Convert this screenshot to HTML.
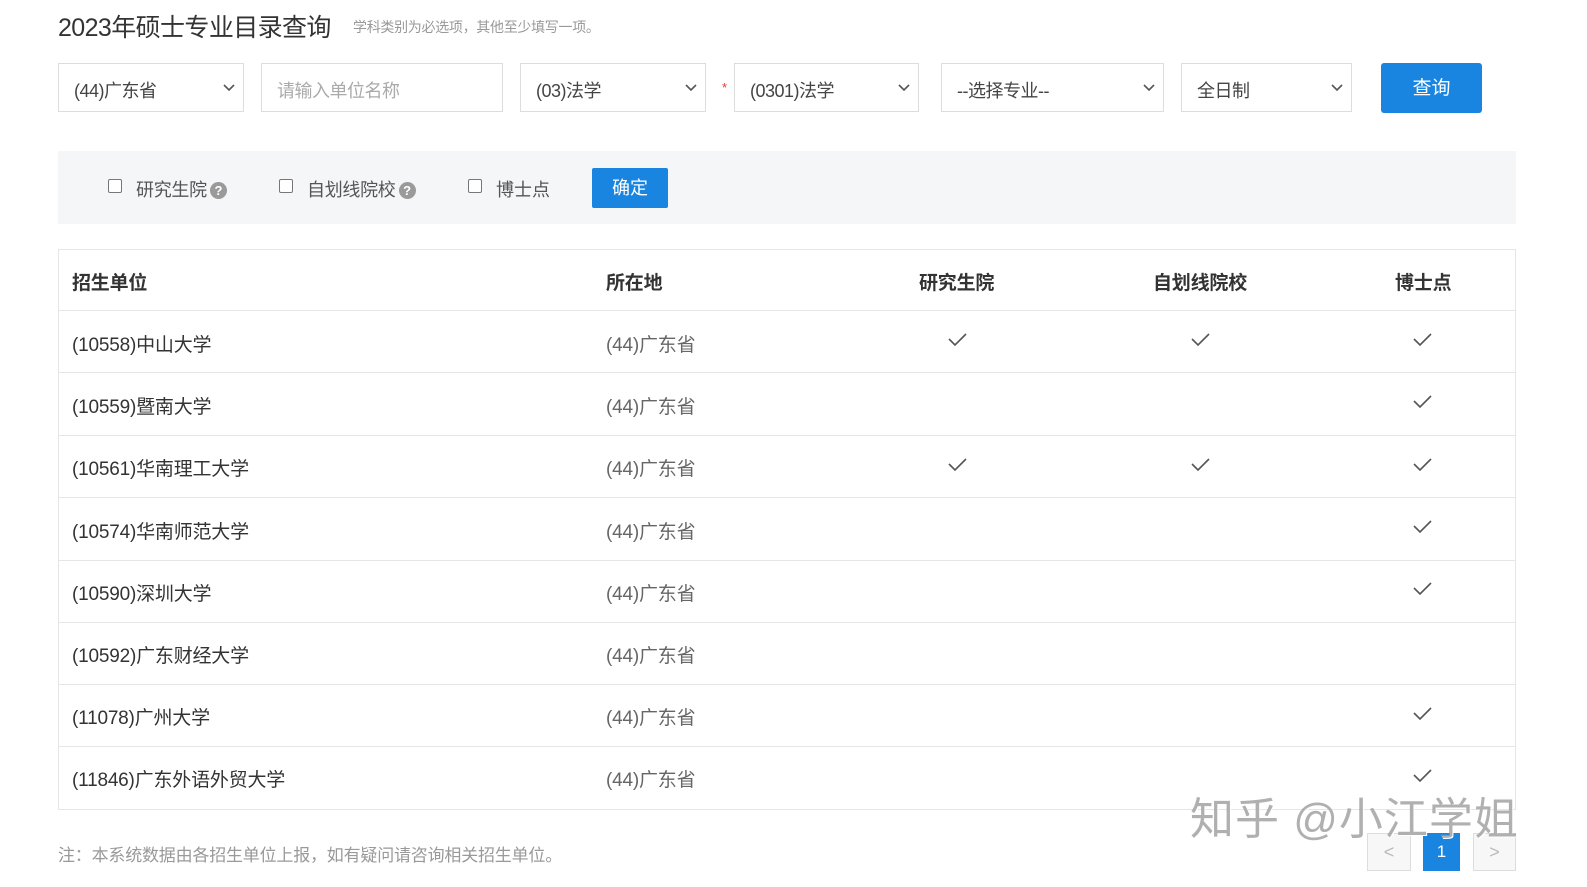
<!DOCTYPE html>
<html><head><meta charset="utf-8"><style>
*{margin:0;padding:0;box-sizing:border-box}
body{width:1587px;height:887px;background:#fff;position:relative;overflow:hidden;font-family:"Liberation Sans","Noto Sans CJK SC",sans-serif;color:#333}
.a{position:absolute;white-space:nowrap}
.sel{position:absolute;top:63px;height:49px;border:1px solid #ddd;background:#fff;font-size:18px;color:#444;padding:13px 0 0 15px;letter-spacing:-0.5px}
.sel svg{position:absolute;right:8px;top:20px}
.cb{position:absolute;width:14px;height:14px;border:1px solid #777;border-radius:2px;background:#fff;top:179px}
.q{display:inline-block;width:17px;height:17px;border-radius:50%;background:#9a9a9a;color:#fff;font-size:13px;font-weight:bold;text-align:center;line-height:17px;vertical-align:1px;margin-left:3px}
.hl{position:absolute;left:59px;width:1456px;height:1px;background:#e6e6e6}
.t{position:absolute;font-size:19px;letter-spacing:-0.2px}
</style></head><body>
<div class="a" style="left:58px;top:8px;font-size:25px;color:#333;letter-spacing:-0.6px">2023年硕士专业目录查询</div>
<div class="a" style="left:353px;top:17px;font-size:14px;color:#999;letter-spacing:-0.3px">学科类别为必选项，其他至少填写一项。</div>

<div class="sel" style="left:58px;width:186px">(44)广东省<svg width="12" height="8"><path d="M1 1l5 5 5-5" stroke="#555" stroke-width="1.6" fill="none"/></svg></div>
<div class="sel" style="left:261px;width:242px;color:#aaa">请输入单位名称</div>
<div class="sel" style="left:520px;width:186px">(03)法学<svg width="12" height="8"><path d="M1 1l5 5 5-5" stroke="#555" stroke-width="1.6" fill="none"/></svg></div>
<div class="a" style="left:722px;top:80px;color:#e33;font-size:13px">*</div>
<div class="sel" style="left:734px;width:185px">(0301)法学<svg width="12" height="8"><path d="M1 1l5 5 5-5" stroke="#555" stroke-width="1.6" fill="none"/></svg></div>
<div class="sel" style="left:941px;width:223px">--选择专业--<svg width="12" height="8"><path d="M1 1l5 5 5-5" stroke="#555" stroke-width="1.6" fill="none"/></svg></div>
<div class="sel" style="left:1181px;width:171px">全日制<svg width="12" height="8"><path d="M1 1l5 5 5-5" stroke="#555" stroke-width="1.6" fill="none"/></svg></div>
<div class="a" style="left:1381px;top:63px;width:101px;height:50px;background:#1a85e0;border-radius:3px;color:#fff;font-size:19px;text-align:center;line-height:52px">查询</div>

<div class="a" style="left:58px;top:151px;width:1458px;height:73px;background:#f5f6f7"></div>
<div class="cb" style="left:108px"></div>
<div class="a" style="left:136px;top:176px;font-size:18px;color:#555;letter-spacing:-0.3px">研究生院<span class="q">?</span></div>
<div class="cb" style="left:279px"></div>
<div class="a" style="left:307px;top:176px;font-size:18px;color:#555;letter-spacing:-0.3px">自划线院校<span class="q">?</span></div>
<div class="cb" style="left:468px"></div>
<div class="a" style="left:496px;top:176px;font-size:18px;color:#555">博士点</div>
<div class="a" style="left:592px;top:168px;width:76px;height:40px;background:#1a85e0;border-radius:2px;color:#fff;font-size:18px;text-align:center;line-height:41px">确定</div>

<div class="a" style="left:58px;top:249px;width:1458px;height:561px;border:1px solid #e6e6e6"></div>
<div class="t" style="left:72px;top:268px;font-weight:bold">招生单位</div>
<div class="t" style="left:606px;top:268px;font-weight:bold">所在地</div>
<div class="t" style="left:919px;top:268px;font-weight:bold">研究生院</div>
<div class="t" style="left:1153px;top:268px;font-weight:bold">自划线院校</div>
<div class="t" style="left:1395px;top:268px;font-weight:bold">博士点</div>

<div class="hl" style="top:310px"></div><div class="hl" style="top:372px"></div><div class="hl" style="top:435px"></div><div class="hl" style="top:497px"></div><div class="hl" style="top:560px"></div><div class="hl" style="top:622px"></div><div class="hl" style="top:684px"></div><div class="hl" style="top:746px"></div>

<div class="t" style="left:72px;top:330px">(10558)中山大学</div><div class="t" style="left:606px;top:330px;color:#666">(44)广东省</div>
<div class="t" style="left:72px;top:392px">(10559)暨南大学</div><div class="t" style="left:606px;top:392px;color:#666">(44)广东省</div>
<div class="t" style="left:72px;top:454px">(10561)华南理工大学</div><div class="t" style="left:606px;top:454px;color:#666">(44)广东省</div>
<div class="t" style="left:72px;top:517px">(10574)华南师范大学</div><div class="t" style="left:606px;top:517px;color:#666">(44)广东省</div>
<div class="t" style="left:72px;top:579px">(10590)深圳大学</div><div class="t" style="left:606px;top:579px;color:#666">(44)广东省</div>
<div class="t" style="left:72px;top:641px">(10592)广东财经大学</div><div class="t" style="left:606px;top:641px;color:#666">(44)广东省</div>
<div class="t" style="left:72px;top:703px">(11078)广州大学</div><div class="t" style="left:606px;top:703px;color:#666">(44)广东省</div>
<div class="t" style="left:72px;top:765px">(11846)广东外语外贸大学</div><div class="t" style="left:606px;top:765px;color:#666">(44)广东省</div>

<svg class="a" style="left:0;top:0" width="1587" height="887">
<g stroke="#555" stroke-width="1.6" fill="none">
<path d="M949 339l6 6 11-11"/><path d="M1192 339l6 6 11-11"/><path d="M1414 339l6 6 11-11"/>
<path d="M1414 401l6 6 11-11"/>
<path d="M949 464l6 6 11-11"/><path d="M1192 464l6 6 11-11"/><path d="M1414 464l6 6 11-11"/>
<path d="M1414 526l6 6 11-11"/>
<path d="M1414 588l6 6 11-11"/>
<path d="M1414 713l6 6 11-11"/>
<path d="M1414 775l6 6 11-11"/>
</g></svg>

<div class="a" style="left:58px;top:841px;font-size:17px;color:#999;letter-spacing:-0.2px">注：本系统数据由各招生单位上报，如有疑问请咨询相关招生单位。</div>

<div class="a" style="left:1367px;top:833px;width:44px;height:38px;border:1px solid #ddd;background:#f7f7f7;color:#bbb;text-align:center;line-height:36px;font-size:18px">&lt;</div>
<div class="a" style="left:1423px;top:833px;width:37px;height:38px;background:#1a85e0;color:#fff;text-align:center;line-height:38px;font-size:17px">1</div>
<div class="a" style="left:1473px;top:833px;width:43px;height:38px;border:1px solid #ddd;background:#f7f7f7;color:#bbb;text-align:center;line-height:36px;font-size:18px">&gt;</div>

<div class="a" style="left:1190px;top:783px;font-size:44px;color:rgba(150,150,150,0.75);letter-spacing:1px;text-shadow:1px 1px 0 #fff">知乎 @小江学姐</div>
</body></html>
